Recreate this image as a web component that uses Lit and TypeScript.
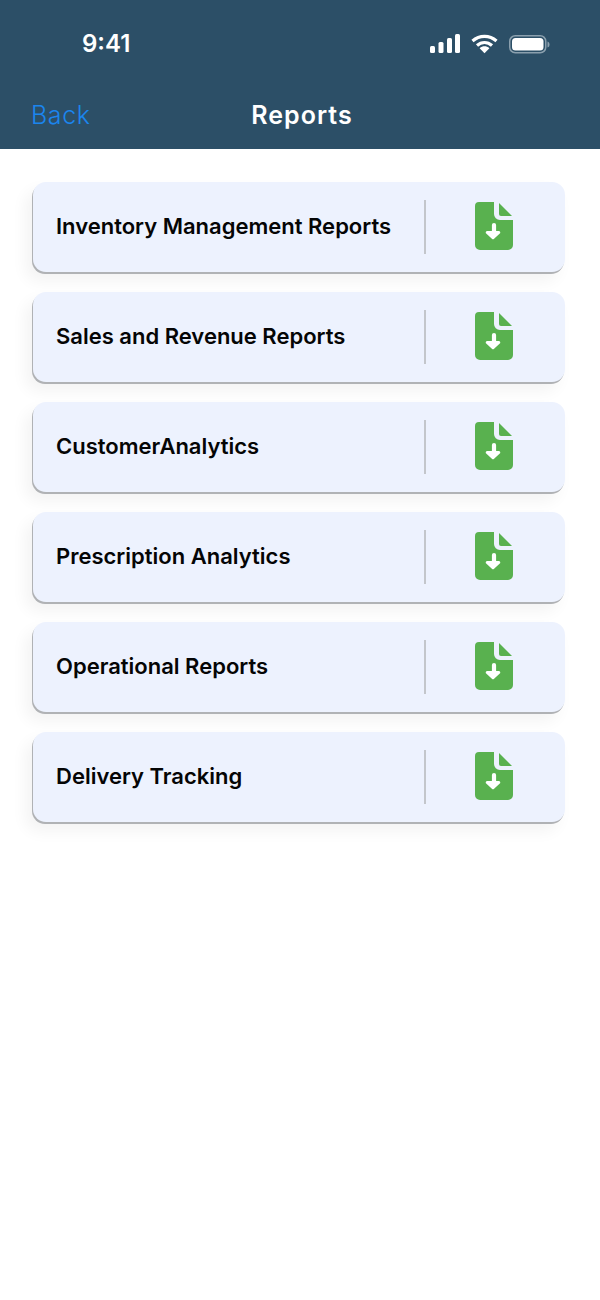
import { LitElement, html, css, svg } from "lit";
import { customElement } from "lit/decorators.js";

const ITEMS = [
  "Inventory Management Reports",
  "Sales and Revenue Reports",
  "CustomerAnalytics",
  "Prescription Analytics",
  "Operational Reports",
  "Delivery Tracking",
];

const fileIcon = svg`<svg class="file" width="38" height="48" viewBox="0 0 38 48">
  <path fill="#59b14f" d="M4 0H19V12a6 6 0 0 0 6 6H38V43a5 5 0 0 1-5 5H5a5 5 0 0 1-5-5V4a4 4 0 0 1 4-4Z"/>
  <path fill="#59b14f" d="M24 1 37 14H26a2 2 0 0 1-2-2Z"/>
  <path fill="#fff" d="M16.900 23a2.100 2.100 0 0 1 4.200 0V29h2.700a1.500 1.500 0 0 1 1 2.600l-5.700 5.200a1.600 1.600 0 0 1-2.200 0l-5.700-5.200a1.500 1.500 0 0 1 1-2.600h4.700Z"/>
</svg>`;

@customElement("app-root")
export class AppRoot extends LitElement {
  static styles = css`
    :host { display: block; width: 600px; height: 1300px; background: #fff; font-family: Inter, "Liberation Sans", sans-serif; }
    .header { background: #2c4f67; height: 149px; box-sizing: border-box; color: #fff; }
    .status { height: 84px; display: flex; justify-content: space-between; padding: 28px 50px 0 82px; box-sizing: border-box; }
    .time { font: 600 24px/32px Inter, sans-serif; }
    .icons { display: flex; align-items: center; gap: 11px; height: 32px; }
    .nav { display: grid; grid-template-columns: 1fr auto 1fr; align-items: center; padding: 1px 31px 0; height: 60px; }
    .back { font: 300 25px/36px Inter, sans-serif; letter-spacing: .6px; color: #1b85ee; }
    .title { font: 600 25px/36px Inter, sans-serif; letter-spacing: 1px; position: relative; left: 2px; }
    .list { display: flex; flex-direction: column; gap: 20px; padding: 33px 35px 0 33px; }
    .card { height: 90px; border-radius: 13px; background: #edf2fe; display: flex; align-items: center;
      box-shadow: -1px 2px 0 #b0b2b5, -7px 9px 16px rgba(0,0,0,.05); }
    .name { flex: 1; padding: 0 0 3px 23px; font-weight: 600; font-size: 22px; color: #050505; }
    .divider { width: 2px; height: 54px; background: #c3c6cb; }
    .action { width: 139px; display: flex; justify-content: center; padding: 0 4px 2px 0; box-sizing: border-box; }
  `;

  render() {
    return html`
      <div class="header">
        <div class="status">
          <span class="time">9:41</span>
          <div class="icons">
            <svg width="30" height="20" viewBox="0 0 30 20" fill="#fff">
              <rect x="0" y="12" width="5" height="7" rx="1.500"/>
              <rect x="8.500" y="8" width="5" height="11" rx="1.500"/>
              <rect x="17" y="4" width="5" height="15" rx="1.500"/>
              <rect x="25" y="0" width="5" height="19" rx="1.500"/>
            </svg>
            <svg width="27" height="20" viewBox="0 0 27 20" fill="none" stroke="#fff" stroke-width="3.200">
              <path d="M1.500 7C8.500.8 18.500.8 25.500 7"/>
              <path d="M6 11.500c4.500-4 10.500-4 15 0"/>
              <path fill="#fff" stroke="none" d="M8.600 14.200c3-2.500 6.800-2.500 9.800 0L13.500 19.200Z"/>
            </svg>
            <svg width="41" height="20" viewBox="0 0 41 20">
              <rect x=".750" y="1.750" width="36" height="17" rx="5.500" fill="none" stroke="#8ba0ae" stroke-width="1.500"/>
              <rect x="3" y="4" width="31.500" height="12.500" rx="3.500" fill="#fff"/>
              <path d="M38.500 7.500c1.500.5 2 1.500 2 3s-.5 2.500-2 3Z" fill="#8ba0ae"/>
            </svg>
          </div>
        </div>
        <div class="nav">
          <span class="back">Back</span>
          <span class="title">Reports</span>
          <span></span>
        </div>
      </div>
      <div class="list">
        ${ITEMS.map(
          (t) => html`<div class="card">
            <span class="name">${t}</span>
            <span class="divider"></span>
            <span class="action">${fileIcon}</span>
          </div>`
        )}
      </div>
    `;
  }
}
